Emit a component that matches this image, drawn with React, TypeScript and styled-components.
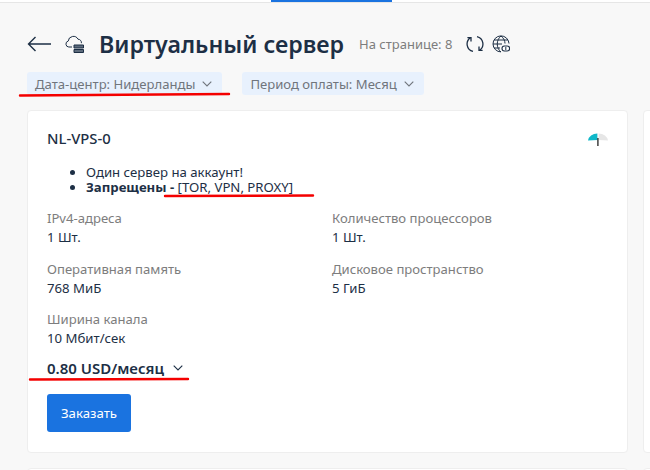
import React from 'react';
import styled, { createGlobalStyle } from 'styled-components';

const Global = createGlobalStyle`
  html, body { margin: 0; padding: 0; width: 650px; height: 470px; overflow: hidden; background: #f8f8f8; }
  body { font-family: "Noto Sans", "Open Sans", sans-serif; color: #1d2f45; }
  * { box-sizing: border-box; }
`;

const Page = styled.div`
  position: relative;
  width: 650px;
  height: 470px;
  overflow: hidden;
`;

const TopBar = styled.div`
  height: 3px;
  background: #fff;
  border-bottom: 1px solid #e6e6e6;
  padding-left: 271px;
`;

const TopTab = styled.div`
  width: 121px;
  height: 2px;
  background: #1a73e0;
`;

const Content = styled.main`
  padding: 26px 0 0 27px;
  width: 1300px;
`;

const Header = styled.header`
  display: flex;
  align-items: center;
  height: 30px;
`;

const IconSlot = styled.span<{ $w: number; $mr: number }>`
  display: inline-flex;
  width: ${p => p.$w}px;
  margin-right: ${p => p.$mr}px;
  flex: none;
`;

const Title = styled.h1`
  margin: 0 15px 0 0;
  font-size: 23.2px;
  line-height: 30px;
  font-weight: 600;
  color: #1d2f45;
`;

const Count = styled.span`
  font-size: 13px;
  color: #7d7d7d;
  margin-right: 14px;
`;

const Filters = styled.div`
  display: flex;
  gap: 20px;
  margin-top: 13px;
`;

const Filter = styled.button`
  display: inline-flex;
  align-items: center;
  gap: 7px;
  height: 23px;
  padding: 0 10px 0 8px;
  border: 0;
  border-radius: 3px;
  background: #e8f1fd;
  font: inherit;
  font-size: 13.1px;
  color: #70757c;
`;

const Cards = styled.div`
  display: grid;
  grid-template-columns: 601px 601px;
  grid-auto-rows: 343px;
  gap: 15px;
  margin-top: 15px;
`;

const Card = styled.section`
  padding: 17px 19px;
  background: #fff;
  border: 1px solid #eeeeee;
  border-radius: 4px;
`;

const CardHead = styled.div`
  display: flex;
  justify-content: space-between;
  align-items: center;
  height: 20px;
`;

const GaugeSlot = styled.span`
  display: inline-flex;
  margin-top: 2px;
`;

const Name = styled.h2`
  margin: 0;
  font-size: 14.8px;
  font-weight: 500;
  color: #1d2f45;
`;

const Notes = styled.ul`
  margin: 16.5px 0 0;
  padding-left: 39px;
  font-size: 13.2px;
  line-height: 15px;
  color: #1d2f45;
`;

const Grid = styled.dl`
  display: grid;
  grid-template-columns: 285px 1fr;
  row-gap: 10.5px;
  margin: 13.5px 0 0;
`;

const Spec = styled.div`
  height: 40px;
`;

const Label = styled.dt`
  font-size: 13.1px;
  line-height: 20px;
  color: #7d7d7d;
`;

const Value = styled.dd`
  margin: 0;
  font-size: 13.2px;
  line-height: 18px;
  color: #1d2f45;
`;

const Price = styled.div`
  display: flex;
  align-items: center;
  gap: 9px;
  margin-top: 8px;
  height: 22px;
  font-size: 15px;
  font-weight: 600;
  color: #1d2f45;
`;

const Order = styled.button`
  display: block;
  width: 84px;
  height: 38px;
  margin-top: 15px;
  border: 0;
  border-radius: 3px;
  background: #1a73e0;
  color: #fff;
  font: inherit;
  font-size: 13.2px;
`;

const Mark = styled.svg`
  position: absolute;
  left: 0;
  top: 0;
  pointer-events: none;
`;

const Back = () => (
  <svg width="24" height="16" viewBox="0 0 24 16" fill="none" stroke="#1d2f45" strokeWidth="1.4">
    <path d="M24 8H1.5M8.5 1 1.5 8l7 7" />
  </svg>
);

const CloudServer = () => (
  <svg width="20" height="20" viewBox="0 0 20 20" fill="none" stroke="#1d2f45" strokeWidth="1">
    <path d="M7 13H3.8a3 3 0 0 1-.6-5.9A5.2 5.2 0 0 1 13 5.2a3.5 3.5 0 0 1 3.4 4" />
    <path d="M9 11h9.5v3H9zM9 15.5h9.5v3H9z" fill="#5d6b7c" />
  </svg>
);

const Chevron = ({ color = '#70757c' }: { color?: string }) => (
  <svg width="10" height="6" viewBox="0 0 10 6" fill="none" stroke={color} strokeWidth="1.1">
    <path d="M.7.7 5 5 9.3.7" />
  </svg>
);

const Refresh = () => (
  <svg width="18" height="18" viewBox="0 0 18 18" fill="none" stroke="#1d2f45" strokeWidth="1.3">
    <path d="M4.6 2.6A7.6 7.6 0 0 0 7 16.4M13.4 15.4A7.6 7.6 0 0 0 11 1.6" />
    <path d="M1.4 2.6h3.6v4M16.6 15.4H13v-4" />
  </svg>
);

const Globe = () => (
  <svg width="18" height="18" viewBox="0 0 18 18" fill="none" stroke="#1d2f45" strokeWidth="1">
    <path d="M9 16.9A8 8 0 1 1 17 8.5" />
    <path d="M1 9h9M2 5h14M2 13h6M9 1c-5 4-5 12 0 16M9 1c2.6 2 4 4.8 4 7.5" />
    <rect x="10" y="11" width="7.6" height="5" rx="2.4" fill="#fff" stroke="#1d2f45" strokeWidth="1.1" />
    <path d="M13.8 12v3" />
  </svg>
);

const Gauge = () => (
  <svg width="20" height="14" viewBox="0 0 20 14">
    <path d="M0 8.5A10 8 0 0 1 9.4 1.4V8Z" fill="#0fb8c9" />
    <path d="M10.6 1.4A10 8 0 0 1 20 8.5L10.6 8Z" fill="#e6e6e6" />
    <rect x="9.2" y="6" width="1.4" height="8" fill="#333" />
  </svg>
);

const specs = [
  ['IPv4-адреса', '1 Шт.'],
  ['Количество процессоров', '1 Шт.'],
  ['Оперативная память', '768 МиБ'],
  ['Дисковое пространство', '5 ГиБ'],
  ['Ширина канала', '10 Мбит/сек'],
];

export default function App() {
  return (
    <Page>
      <Global />
      <TopBar><TopTab /></TopBar>
      <Content>
        <Header>
          <IconSlot $w={24} $mr={14}><Back /></IconSlot>
          <IconSlot $w={20} $mr={14}><CloudServer /></IconSlot>
          <Title>Виртуальный сервер</Title>
          <Count>На странице: 8</Count>
          <IconSlot $w={18} $mr={8}><Refresh /></IconSlot>
          <IconSlot $w={18} $mr={0}><Globe /></IconSlot>
        </Header>
        <Filters>
          <Filter>Дата-центр: Нидерланды <Chevron /></Filter>
          <Filter>Период оплаты: Месяц <Chevron /></Filter>
        </Filters>
        <Cards>
          <Card>
            <CardHead>
              <Name>NL-VPS-0</Name>
              <GaugeSlot><Gauge /></GaugeSlot>
            </CardHead>
            <Notes>
              <li>Один сервер на аккаунт!</li>
              <li><b>Запрещены - </b>[TOR, VPN, PROXY]</li>
            </Notes>
            <Grid>
              {specs.map(([l, v]) => (
                <Spec key={l}>
                  <Label>{l}</Label>
                  <Value>{v}</Value>
                </Spec>
              ))}
            </Grid>
            <Price>0.80 USD/месяц <Chevron color="#1d2f45" /></Price>
            <Order>Заказать</Order>
          </Card>
          <Card />
          <Card />
          <Card />
        </Cards>
      </Content>
      <Mark width="650" height="470" viewBox="0 0 650 470" fill="none" stroke="#f40000" strokeWidth="2.4" strokeLinecap="round">
        <path d="M20 95.5 229 94" />
        <path d="M165 196 313 195.5" />
        <path d="M30 379.5 188 379" />
      </Mark>
    </Page>
  );
}
